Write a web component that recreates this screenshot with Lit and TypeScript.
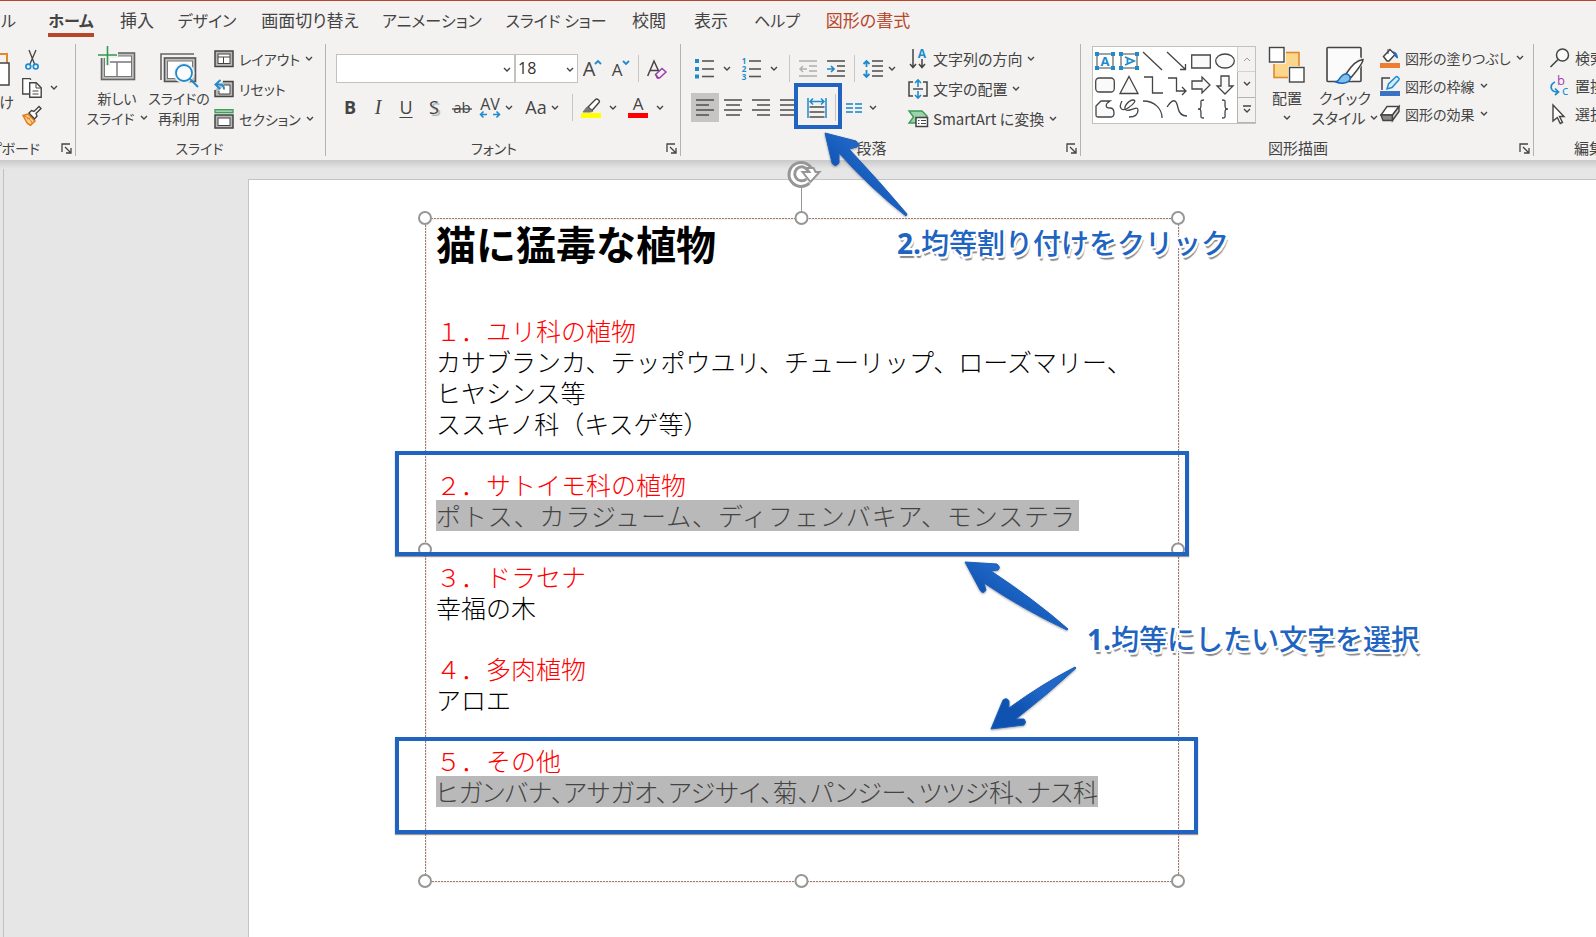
import { LitElement, html, svg, css, nothing } from "lit";
import { customElement } from "lit/decorators.js";
import { classMap } from "lit/directives/class-map.js";

const INK = "#444444";
const BLUE = "#1e8bcd";

const icon = (w: number, h: number, body: unknown) => html`<svg
  class="icon" width=${w} height=${h} viewBox="0 0 ${w} ${h}" fill="none" stroke=${INK} aria-hidden="true">${body}</svg>`;

const chevron = html`<svg class="icon" width="8" height="6" viewBox="0 0 8 6" fill="none" stroke="#444" stroke-width="1.4" aria-hidden="true"><path d="M1 1l3 3 3-3"/></svg>`;

const lines = (rows: number[][], color = "#555") =>
  svg`${rows.map(([x1, x2, y]) => svg`<path d="M${x1} ${y}H${x2}" stroke=${color} stroke-width="1.6"/>`)}`;

const I = {
  cut: icon(20, 20, svg`<path d="M7 0l5.500 14M14 0L8 14" stroke-width="1.300"/><circle cx="6.300" cy="16.600" r="2.400" stroke=${BLUE} stroke-width="1.700"/><circle cx="13.700" cy="16.600" r="2.400" stroke=${BLUE} stroke-width="1.700"/>`),
  copy: icon(20, 20, svg`<path d="M7 16H.7V.700H8l1 1" fill="#fff" stroke-width="1.300"/><path d="M7.700 4.700h6.500l5 5v9.500H7.700z" fill="#fff" stroke-width="1.400"/><path d="M14 5v5h5M10.500 13h6M10.500 16h6"/>`),
  brush: icon(20, 20, svg`<path d="M1 9.500l5-1.500 7 7-4.500 4.300-3-1.800z" fill="#ffd08a" stroke="#e07b18" stroke-width="1.500"/><path d="M2 10c4 1 7 4 8 7M5 13l3-1" stroke="#e07b18"/><path d="M7 7l2.500-2.500 2.500 1 5-5 2 2-5 5 1 2.500L12.500 13z" fill="#fff" stroke-width="1.400"/>`),
  layout: icon(20, 18, svg`<rect x="1" y="1" width="18" height="15.500" fill="#b9b9b9" stroke-width="1.500"/><rect x="4" y="4" width="12" height="9.500" fill="#fff"/><path d="M4 7h12M9.500 7v6.500"/>`),
  reset: icon(20, 18, svg`<path d="M9 1.500h10v15H1V10" fill="#b9b9b9" stroke-width="1.500"/><path d="M10 5h6v9H5v-3" fill="#fff"/><path d="M6.500 0L1.500 4.500 6 9M2 4.500h4c3 0 4 2 4 5" stroke=${BLUE} stroke-width="2"/>`),
  section: icon(20, 20, svg`<rect x="1" y=".7" width="18" height="3" fill="#9fd5ae" stroke="#3d9a57" stroke-width="1.300"/><rect x="1" y="6" width="18" height="13" fill="#b9b9b9" stroke-width="1.500"/><rect x="4" y="9" width="12" height="7.500" fill="#fff"/>`),
  newSlide: icon(38, 36, svg`<rect x="3.500" y="7" width="33" height="26.500" fill="#c0c0c0" stroke="#666" stroke-width="1.600"/><rect x="6.500" y="10" width="27" height="20.500" fill="#fff" stroke="#777"/><path d="M6.500 16h27M19 16v14.500" stroke="#777" stroke-width="1.400"/><path d="M0 6h7V0h5v6h8v6h-8v8H7v-8H0z" fill="#f3f2f1" stroke="none"/><path d="M0 9h19M9.500 0v19" stroke="#2f9a50" stroke-width="1.600"/>`),
  reuse: icon(38, 36, svg`<path d="M1 28V2h33" stroke="#666" stroke-width="1.600"/><rect x="4.500" y="6" width="31" height="23.500" fill="#c0c0c0" stroke="#555" stroke-width="1.600"/><rect x="7.500" y="9" width="25" height="17.500" fill="#fff" stroke="#777"/><circle cx="24" cy="21" r="10.500" fill="#f3f2f1" stroke="none"/><circle cx="24" cy="21" r="8" fill="#fbfbfb" stroke=${BLUE} stroke-width="1.800"/><path d="M30 27l8 8" stroke=${BLUE} stroke-width="2"/>`),
  clear: icon(20, 20, svg`<path d="M.700 17L7 2l6 13M3 11.500h8" stroke-width="1.500"/><path d="M8.500 15.500L15 9.500l4 3.500-6.500 6h-2z" fill="#f3f2f1" stroke="#9a3fae" stroke-width="1.500"/><path d="M9 15.500l3 3.500h-2z" fill="#9a3fae" stroke="#9a3fae"/>`),
  pen: icon(20, 20, svg`<path d="M7 9l7.500-7.500c1.500-1.500 5 1 3.500 3L11 12.500z" fill="#fff" stroke-width="1.400"/><path d="M6 9l5.500 4.500L9 14H2z" fill="#777" stroke="#777"/><rect x="0" y="15" width="20" height="5" fill="#ffff00" stroke="none"/>`),
  bullets: icon(20, 20, svg`<path d="M0 0h4v4H0zM0 8h4v4H0zM0 15.500h4v4H0z" fill=${BLUE} stroke="none"/>${lines([[7, 19, 2], [7, 19, 10], [7, 19, 17.500]])}`),
  dedent: icon(20, 20, svg`${lines([[1, 19, 2], [11, 19, 7], [11, 19, 12], [1, 19, 17]], "#b1b1b1")}<path d="M2 10h7M5 7l-3 3 3 3" stroke="#b1b1b1" stroke-width="1.500"/>`),
  indent: icon(20, 20, svg`${lines([[1, 19, 2], [11, 19, 7], [11, 19, 12], [1, 19, 17]])}<path d="M1 10h7M5 7l3 3-3 3" stroke=${BLUE} stroke-width="1.700"/>`),
  spacing: icon(20, 20, svg`${lines([[9, 20, 2], [9, 20, 7], [9, 20, 12], [9, 20, 17]])}<path d="M3.500 2v6M.500 5l3-3 3 3M3.500 11v7M.500 15l3 3 3-3" stroke=${BLUE} stroke-width="1.800"/>`),
  left: icon(20, 20, lines([[1, 19, 2], [1, 14, 7], [1, 19, 12], [1, 14, 17]])),
  center: icon(20, 20, lines([[1, 19, 2], [3, 17, 7], [1, 19, 12], [3, 17, 17]])),
  right: icon(20, 20, lines([[1, 19, 2], [6, 19, 7], [1, 19, 12], [6, 19, 17]])),
  justify: icon(20, 20, lines([[1, 19, 2], [1, 19, 7], [1, 19, 12], [1, 19, 17]])),
  distribute: icon(20, 20, svg`${lines([[2.500, 17.500, 9], [2.500, 17.500, 14], [2.500, 17.500, 19]])}<path d="M1 0v20M19 0v20" stroke=${BLUE} stroke-width="1.500"/><path d="M3 3.500h14M6 .500l-3 3 3 3M14 .500l3 3-3 3" stroke=${BLUE} stroke-width="1.500"/>`),
  columns: icon(20, 20, lines([[2, 9, 6], [11, 18, 6], [2, 9, 10], [11, 18, 10], [2, 9, 14], [11, 18, 14]], BLUE)),
  textFit: icon(20, 20, svg`<path d="M5 3H1v14h4M15 3h4v14h-4" stroke-width="1.500"/><path d="M5 10h10" stroke-width="1.400"/><path d="M10 1v7M7 4l3-3 3 3M10 12v7M7 16l3 3 3-3" stroke=${BLUE} stroke-width="1.600"/>`),
  smartArt: icon(20, 18, svg`<path d="M1 1h13l5 5-2 2H8v5H1l4.500-6z" fill="#9bd3ab" stroke="#3d9a57" stroke-width="1.400"/><rect x="8" y="7.500" width="11.500" height="9" fill="#fff" stroke-width="1.500"/><path d="M10 10.500h1.500M13 10.500h5M10 13.500h1.500M13 13.500h5"/>`),
  arrange: icon(38, 38, svg`<rect x="6" y="6.500" width="25" height="25" fill="#fbd68c" stroke="#e08a2c" stroke-width="1.600"/><rect x="0" y="0" width="18" height="18" fill="#f3f2f1" stroke="none"/><rect x="20" y="20" width="18" height="18" fill="#f3f2f1" stroke="none"/><rect x="1.500" y="1.500" width="14.500" height="14.500" fill="#fff" stroke-width="1.400"/><rect x="21.500" y="21.500" width="14.500" height="14.500" fill="#fff" stroke-width="1.400"/>`),
  quick: icon(38, 38, svg`<rect x="1" y="1.500" width="34" height="34" rx="1" fill="#fbfbfb" stroke-width="1.600"/><path d="M18 28L34 13l3 2-12 18z" fill="#fff" stroke="#f3f2f1" stroke-width="3"/><path d="M20 28c5-8 11-14 17-14.500 0 4-6 11-12 18z" fill="#fff" stroke-width="1.500"/><path d="M10 36c4-1 4-8 10-8 3 0 5 3 4 5.500-2 4-9 4.500-14 2.500z" fill="#83bfe9" stroke="#1767b8" stroke-width="1.500"/>`),
  fill: icon(20, 20, svg`<path d="M3.500 8.500L10 1.500l5 5-6 6.500H7z" fill="#fff" stroke-width="1.500"/><path d="M8 1v5" /><path d="M13 4c3 0 4 2 4.500 6-2-1-3-2-3-4" fill="#2468b8" stroke="#2468b8"/><rect x="0" y="15" width="20" height="5" fill="#ee7d31" stroke="none"/>`),
  outline: icon(20, 20, svg`<path d="M10 2H2v12" stroke-width="1.500"/><path d="M7 13l1.500-5L16 .800c1-.800 4 1.800 3 3L12 11.500z" fill="#d7ecfa" stroke=${BLUE} stroke-width="1.500"/><rect x="0" y="15" width="20" height="5" fill="#3a73c6" stroke="none"/>`),
  effects: icon(20, 18, svg`<path d="M7 1.500h12L12.500 10H1z" fill="#fff" stroke-width="1.400"/><path d="M1 10h11.500v5.500H3z" fill="#8a8a8a" stroke-width="1.400"/><path d="M19 1.500v5l-6.500 9V10z" fill="#d0d0d0" stroke-width="1.400"/>`),
  find: icon(20, 20, svg`<circle cx="12.500" cy="7" r="6" stroke-width="1.500" fill="#fbfbfb"/><path d="M8 11.500L.500 19" stroke-width="1.600"/>`),
  select: icon(20, 20, svg`<path d="M3 1l11 11.500H9.500l3 6-2.200 1-3-6L3 17z" fill="#fff" stroke-width="1.400"/>`),
  launch: icon(11, 11, svg`<path d="M1 9V1h8" stroke-width="1.300"/><path d="M4 4l6 6M10 5v5H5" stroke-width="1.300"/>`),
};

const textMark = (x: number, y: number, size: number, s: string, color = INK, cls = "") =>
  svg`<text class="mark ${cls}" x=${x} y=${y} font-size=${size} fill=${color} stroke="none" text-anchor="middle">${s}</text>`;

const marks = {
  grow: icon(22, 20, svg`${textMark(8, 17, 20, "A")}<path d="M14 5l3-3 3 3" stroke=${BLUE} stroke-width="1.800"/>`),
  shrink: icon(22, 20, svg`${textMark(8, 17, 17, "A")}<path d="M14 2l3 3 3-3" stroke=${BLUE} stroke-width="1.800"/>`),
  strike: icon(22, 20, svg`${textMark(11, 15, 15, "ab")}<path d="M1 11h20" stroke-width="1.300"/>`),
  spacing: icon(22, 22, svg`${textMark(11, 13, 16, "AV")}<path d="M1 17.500h7M4.500 14.500l-3 3 3 3M21 17.500h-7M17.500 14.500l3 3-3 3" stroke=${BLUE} stroke-width="1.600"/>`),
  color: icon(20, 20, svg`${textMark(10, 12, 17, "A")}<rect x="0" y="15" width="20" height="5" fill="#ff0000" stroke="none"/>`),
  numbers: icon(20, 20, svg`${textMark(2, 5, 8, "1", BLUE, "bold")}${textMark(2, 13, 8, "2", BLUE, "bold")}${textMark(2, 21, 8, "3", BLUE, "bold")}${lines([[7, 19, 2], [7, 19, 10], [7, 19, 17.500]])}`),
  direction: icon(20, 20, svg`<path d="M5 0v18M2 15l3 3.500L8 15M14 10v8M11 15l3 3.500 3-3.500" stroke-width="1.500"/>${textMark(14, 9, 12, "A", BLUE, "bold")}`),
  replace: icon(20, 20, svg`${textMark(11, 9, 13, "b", "#a33fb5")}${textMark(15, 19, 13, "c", BLUE)}<path d="M5 6C-1 9 0 16 8 16M5 12.500L8.500 16 5 19" stroke=${BLUE} stroke-width="1.700"/>`),
};

const corners = svg`<path d="M0 1h4v4H0zM16 1h4v4h-4zM0 15h4v4H0zM16 15h4v4h-4z" fill=${BLUE} stroke="none"/>`;
const shape = (d: string, fill = "none") => svg`<path d=${d} fill=${fill} stroke-width="1.300"/>`;
const shapes: [string, unknown][] = [
  ["テキスト ボックス", svg`<rect x="2" y="3" width="16" height="14"/>${corners}${textMark(10, 15, 13, "A", BLUE, "bold")}`],
  ["縦書きテキスト ボックス", svg`<rect x="2" y="3" width="16" height="14"/>${corners}<path d="M6 6l9 4-9 4M8.500 7v6" stroke=${BLUE} stroke-width="1.800"/>`],
  ["線", shape("M0 1l19 18")],
  ["矢印", shape("M0 1l18 17M18.500 13v5.500H13")],
  ["正方形/長方形", shape("M.700 4h18.600v13H.700z", "#fafafa")],
  ["楕円", svg`<ellipse cx="10" cy="10" rx="9.300" ry="7" fill="#fafafa" stroke-width="1.300"/>`],
  ["角丸四角形", svg`<rect x=".7" y="3" width="18.600" height="14" rx="3.500" fill="#fafafa" stroke-width="1.300"/>`],
  ["二等辺三角形", shape("M10 1.500L19 18.500H1z", "#fafafa")],
  ["カギ線コネクタ", shape("M1 2h8.500v16H20")],
  ["カギ線矢印コネクタ", shape("M1 3h8.500v13H19M15 12l4 4-4 4")],
  ["右矢印", shape("M1 6h10V2l8 8-8 8v-4H1z", "#fafafa")],
  ["下矢印", shape("M6 1v10H2l8 8 8-8h-4V1z", "#fafafa")],
  ["フリーフォーム", shape("M1 7l5-5h9c-5 3-5 7 0 7 4 0 4 3 4 5 0 3-1 4-3 4H3c-2 0-2-1-2-3z", "#fafafa")],
  ["曲線", shape("M3 2c-4 7 0 11 6 7s9-8 5-8-11 8-7 10 12-5 12 0-4 7-9 7")],
  ["円弧", shape("M0 2c12 0 19 8 19 17")],
  ["曲線コネクタ", shape("M0 8c8-12 10-4 11 1s4 8 9 8")],
  ["左中かっこ", shape("M13 1c-4 0-3 1-3 5s-1 4-3 4c2 0 3 0 3 4s-1 5 3 5")],
  ["右中かっこ", shape("M7 1c4 0 3 1 3 5s1 4 3 4c-2 0-3 0-3 4s1 5-3 5")],
];

const tabs = ["ファイル", "ホーム", "挿入", "デザイン", "画面切り替え", "アニメーション", "スライド ショー", "校閲", "表示", "ヘルプ", "図形の書式"];
const isKana = (s: string) => /^[\u30a0-\u30ff ]+$/.test(s);

const sections = [
  { title: "１．ユリ科の植物", body: ["カサブランカ、テッポウユリ、チューリップ、ローズマリー、", "ヒヤシンス等", "ススキノ科（キスゲ等）"], mark: "" },
  { title: "２．サトイモ科の植物", body: ["ポトス、カラジューム、ディフェンバキア、モンステラ"], mark: "wide" },
  { title: "３．ドラセナ", body: ["幸福の木"], mark: "" },
  { title: "４．多肉植物", body: ["アロエ"], mark: "" },
  { title: "５．その他", body: ["ヒガンバナ、アサガオ、アジサイ、菊、パンジー、ツツジ科、ナス科"], mark: "dense" },
];

@customElement("app-root")
export class AppRoot extends LitElement {
  static styles = css`
    :host {
      display: flex;
      flex-direction: column;
      position: relative;
      height: 100vh;
      overflow: hidden;
      background: #e6e6e6;
      color: #444;
      font: 15px/20px "Noto Sans CJK JP", sans-serif;
    }
    * { box-sizing: border-box; }
    button {
      margin: 0; padding: 0; border: 0; background: none; color: inherit;
      font: inherit; font-feature-settings: inherit; white-space: nowrap;
    }
    .icon { display: block; flex: none; overflow: visible; }
    .mark { font-family: "Open Sans", sans-serif; }
    .mark.bold { font-weight: 700; }

    .ribbon {
      position: relative;
      flex: none;
      background: #f3f2f1;
      border-top: 1px solid #b7472a;
      font-feature-settings: "palt";
      overflow: hidden;
    }
    .tabs {
      display: grid;
      grid-template-columns: 33px 76px 56px 84px 122px 122px 126px 60px 64px 68px 114px;
      height: 43px;
      font-size: 17px;
    }
    .tab { display: flex; justify-content: center; padding-top: 7px; line-height: 24px; }
    .tab.kana { font-size: 16px; }
    .tab:first-child { justify-content: flex-end; padding-right: 17px; }
    .tab span { height: 29px; }
    .tab.active { font-weight: 700; }
    .tab.active span { border-bottom: 4px solid #b7472a; }
    .tab.context { color: #b7472a; }

    .groups { display: flex; height: 116px; padding-bottom: 4px; }
    .group { display: flex; flex-direction: column; flex: none; border-right: 1px solid #b5b3b1; }
    .group:last-child { border-right: 0; }
    .content { display: flex; flex: 1; }
    .footer { display: grid; grid-template-columns: 1fr 18px; height: 16px; line-height: 16px; align-items: center; }
    .footer span { text-align: center; white-space: nowrap; }
    .footer button { justify-self: end; padding-right: 3px; }
    .clipboard { width: 76px; }
    .clipboard, .slides, .font .footer { font-size: 14px; }
    .clipboard .footer { grid-template-columns: 40px 1fr; }
    .clipboard .footer span { display: flex; justify-content: flex-end; }
    .slides { width: 250px; }
    .slides .content { padding-left: 10px; }
    .slides .footer { padding-left: 16px; }
    .font { width: 355px; }
    .paragraph { width: 400px; }
    .drawing { width: 453px; }
    .editing { width: 140px; }

    .paste { display: flex; flex-direction: column; align-items: flex-end; width: 14px; padding-top: 8px; gap: 4px; font-size: 15px; }
    .clips { display: grid; grid-template-rows: repeat(3, 28px); padding: 2px 0 0 8px; }
    .clip { display: flex; align-items: center; gap: 8px; }

    .big { display: flex; flex-direction: column; align-items: center; width: 62px; padding-top: 2px; }
    .big .pic { display: flex; align-items: flex-start; height: 42px; }
    .big .down { padding-top: 7px; }
    .line { display: flex; align-items: center; gap: 5px; }
    .reuse .pic { padding-top: 6px; }

    .stack { display: flex; flex-direction: column; padding-left: 4px; }
    .row { display: flex; align-items: center; gap: 5px; height: 30px; }
    .row.compact { height: 28px; }

    .tools { display: flex; flex-direction: column; padding: 10px 0 0 10px; gap: 10px; }
    .bar { display: flex; align-items: center; height: 29px; }
    .bar > * { flex: none; }
    .tool { display: grid; place-items: center; width: 28px; height: 29px; font: 18px/29px "Open Sans", sans-serif; }
    .tool.on { background: #c6c5c4; }
    .tool.bold { font-weight: 700; }
    .tool.italic { font-family: "Liberation Serif", serif; font-style: italic; font-size: 20px; }
    .tool.under { text-decoration: underline; text-underline-offset: 3px; }
    .tool.shade { text-shadow: 2px 2px 1px #aaa; }
    .more { display: grid; place-items: center; width: 16px; height: 29px; margin-right: 3px; }
    .more.tight { width: 10px; margin-right: 8px; }
    .sep { width: 1px; height: 27px; margin: 0 4px; background: #c8c6c4; }
    .combo { position: relative; display: flex; }
    .combo select {
      appearance: none; height: 29px; margin: 0; padding: 0 2px; border: 1px solid #c3c1bf; border-radius: 0;
      background: #fff; color: #333; font: 16px/27px "Open Sans", sans-serif;
    }
    .combo .name { width: 179px; }
    .combo .size { width: 63px; }
    .combo .icon { position: absolute; right: 4px; top: 13px; pointer-events: none; }
    .orient { padding-left: 12px; }
    .paragraph .tools { flex: none; width: 215px; }

    .gallery { display: flex; flex: none; margin: 2px 2px 0 11px; width: 164px; height: 78px; border: 1px solid #c3c1bf; background: #fff; }
    .shapes { display: grid; grid-template-columns: repeat(6, 24px); grid-template-rows: repeat(3, 24px); padding: 2px 0; flex: 1; }
    .shapes button { display: grid; place-items: center; }
    .scroll { display: grid; grid-template-rows: repeat(3, 1fr); width: 18px; background: #f3f2f1; }
    .scroll button { display: grid; place-items: center; border: 1px solid #b5b3b1; border-width: 0 0 1px 1px; }
    .scroll button:first-child { opacity: 0.5; }
    .drawing .big { flex: none; width: 58px; }
    .drawing .stack { padding-left: 6px; font-size: 14px; }
    .editing .stack { padding-left: 16px; }
    .editing .footer { grid-template-columns: 78px; justify-content: start; padding-left: 16px; }

    .work { display: flex; flex: 1; min-height: 0; position: relative; padding-left: 3px; }
    .work::before { content: ""; position: absolute; inset: 0 0 auto; height: 9px; background: linear-gradient(#c9c9c9, #e6e6e6); }
    .desk { flex: 1; display: flex; border-left: 1px solid #c0c0c0; margin-top: 3px; padding: 16px 0 0 244px; }
    .slide { flex: 1; padding: 38px 0 0 176px; background: #fff; border: 1px solid #c4c4c4; border-width: 1px 0 0 1px; }

    .box { position: relative; width: 753px; height: 663px; padding: 2px 0 0 11px; color: #000; }
    .edge { position: absolute; inset: 0; width: 100%; height: 100%; overflow: visible; }
    .text { position: relative; }
    h1 { margin: 0 0 49px; font-size: 40px; line-height: 46px; font-weight: 700; }
    .section { margin-bottom: 30px; font-size: 25px; line-height: 31px; font-weight: 300; white-space: nowrap; }
    h2 { margin: 0; font: inherit; color: #f00; }
    p { margin: 0; }
    .wide, .dense { background: #b9b9b9; color: #444; text-align: justify; text-align-last: justify; white-space: normal; }
    .wide { width: 643px; padding-right: 4px; }
    .dense { width: 662px; font-feature-settings: "palt"; }

    .notes { position: absolute; inset: 0; pointer-events: none; }
    .arrows { position: absolute; inset: 0; overflow: visible; filter: drop-shadow(0 1px 1px #5558); }
    .frame { position: absolute; border: 4px solid #2063c0; box-shadow: 0 1px 1px #5559; }
    .frame.button { left: 794px; top: 83px; width: 48px; height: 46px; box-shadow: none; }
    .frame.second { left: 395px; top: 451px; width: 794px; height: 105px; }
    .frame.fifth { left: 395px; top: 737px; width: 803px; height: 97px; }
    .note {
      position: absolute; margin: 0; color: #2063c0; font-size: 28px; line-height: 36px; font-weight: 500; white-space: nowrap;
      text-shadow: 2px 0 #fff, -2px 0 #fff, 0 2px #fff, 0 -2px #fff, 2px 2px #fff, -2px 2px #fff, 2px -2px #fff, -2px -2px #fff, 2px 4px 1px #888;
    }
    .note b { font-family: "Open Sans", sans-serif; }
    .note.click { left: 897px; top: 224px; }
    .note.pick { left: 1087px; top: 620px; }
  `;

  private footer(label: string, launcher = true) {
    return html`<div class="footer">
      <span>${label}</span>
      ${launcher ? html`<button aria-label="${label}の設定">${I.launch}</button>` : nothing}
    </div>`;
  }

  private tool(label: string, content: unknown, cls = "") {
    return html`<button class="tool ${cls}" aria-label=${label}>${content}</button>`;
  }

  private more(label: string, tight = false) {
    return html`<button class=${classMap({ more: true, tight })} aria-label="${label}のオプション">${chevron}</button>`;
  }

  private row(pic: unknown, label: string, drop = true, cls = "") {
    return html`<button class="row ${cls}">${pic}<span>${label}</span>${drop ? chevron : nothing}</button>`;
  }

  private ribbon() {
    return html`<header class="ribbon">
      <nav class="tabs" aria-label="リボン タブ">
        ${tabs.map((t) => html`<button class=${classMap({ tab: true, kana: isKana(t), active: t === "ホーム", context: t === "図形の書式" })}><span>${t}</span></button>`)}
      </nav>
      <div class="groups">
        <section class="group clipboard">
          <div class="content">
            <button class="paste">
              ${icon(36, 36, svg`<path d="M4 2h25v12" stroke="#e08a2c" stroke-width="2"/><path d="M12 11h19v22H12z" fill="#fff" stroke-width="1.500"/>`)}
              <span>貼り付け</span>
            </button>
            <div class="clips">
              <button class="clip" aria-label="切り取り">${I.cut}</button>
              <button class="clip" aria-label="コピー">${I.copy}${chevron}</button>
              <button class="clip" aria-label="書式のコピー">${I.brush}</button>
            </div>
          </div>
          ${this.footer("クリップボード")}
        </section>

        <section class="group slides">
          <div class="content">
            <button class="big"><span class="pic">${I.newSlide}</span><span>新しい</span><span class="line">スライド ${chevron}</span></button>
            <button class="big reuse"><span class="pic">${I.reuse}</span><span>スライドの</span><span>再利用</span></button>
            <div class="stack">
              ${this.row(I.layout, "レイアウト")}${this.row(I.reset, "リセット", false)}${this.row(I.section, "セクション")}
            </div>
          </div>
          ${this.footer("スライド", false)}
        </section>

        <section class="group font">
          <div class="content">
            <div class="tools">
              <div class="bar">
                <span class="combo"><select class="name" aria-label="フォント"><option></option></select>${chevron}</span>
                <span class="combo"><select class="size" aria-label="フォント サイズ"><option>18</option></select>${chevron}</span>
                ${this.tool("拡大", marks.grow)}${this.tool("縮小", marks.shrink)}<i class="sep"></i>${this.tool("書式のクリア", I.clear)}
              </div>
              <div class="bar">
                ${this.tool("太字", "B", "bold")}${this.tool("斜体", "I", "italic")}${this.tool("下線", "U", "under")}${this.tool("影", "S", "shade")}
                ${this.tool("取り消し線", marks.strike)}${this.tool("文字の間隔", marks.spacing)}${this.more("文字の間隔", true)}
                ${this.tool("文字種の変換", "Aa")}${this.more("文字種の変換", true)}<i class="sep"></i>
                ${this.tool("蛍光ペン", I.pen)}${this.more("蛍光ペン")}${this.tool("フォントの色", marks.color)}${this.more("フォントの色")}
              </div>
            </div>
          </div>
          ${this.footer("フォント")}
        </section>

        <section class="group paragraph">
          <div class="content">
            <div class="tools">
              <div class="bar">
                ${this.tool("箇条書き", I.bullets)}${this.more("箇条書き")}${this.tool("段落番号", marks.numbers)}${this.more("段落番号")}<i class="sep"></i>
                ${this.tool("インデントを減らす", I.dedent)}${this.tool("インデントを増やす", I.indent)}<i class="sep"></i>
                ${this.tool("行間", I.spacing)}${this.more("行間", true)}
              </div>
              <div class="bar">
                ${this.tool("左揃え", I.left, "on")}${this.tool("中央揃え", I.center)}${this.tool("右揃え", I.right)}${this.tool("両端揃え", I.justify)}
                ${this.tool("均等割り付け", I.distribute)}<i class="sep"></i>${this.tool("段組み", I.columns)}${this.more("段組み", true)}
              </div>
            </div>
            <div class="stack orient">
              ${this.row(marks.direction, "文字列の方向")}${this.row(I.textFit, "文字の配置")}${this.row(I.smartArt, "SmartArt に変換")}
            </div>
          </div>
          ${this.footer("段落")}
        </section>

        <section class="group drawing">
          <div class="content">
            <div class="gallery">
              <div class="shapes">${shapes.map(([name, body]) => html`<button aria-label=${name}>${icon(20, 20, body)}</button>`)}</div>
              <div class="scroll">
                <button aria-label="上へ">${icon(8, 6, svg`<path d="M1 5l3-3 3 3"/>`)}</button>
                <button aria-label="下へ">${chevron}</button>
                <button aria-label="その他">${icon(8, 9, svg`<path d="M0 1h8M1 4l3 3 3-3" stroke-width="1.300"/>`)}</button>
              </div>
            </div>
            <button class="big"><span class="pic">${I.arrange}</span><span>配置</span><span class="down">${chevron}</span></button>
            <button class="big"><span class="pic">${I.quick}</span><span>クイック</span><span class="line">スタイル ${chevron}</span></button>
            <div class="stack">
              ${this.row(I.fill, "図形の塗りつぶし", true, "compact")}${this.row(I.outline, "図形の枠線", true, "compact")}${this.row(I.effects, "図形の効果", true, "compact")}
            </div>
          </div>
          ${this.footer("図形描画")}
        </section>

        <section class="group editing">
          <div class="content">
            <div class="stack">
              ${this.row(I.find, "検索", false, "compact")}${this.row(marks.replace, "置換", true, "compact")}${this.row(I.select, "選択", true, "compact")}
            </div>
          </div>
          ${this.footer("編集", false)}
        </section>
      </div>
    </header>`;
  }

  private edge() {
    const dots = [["0", "0"], ["50%", "0"], ["100%", "0"], ["0", "50%"], ["100%", "50%"], ["0", "100%"], ["50%", "100%"], ["100%", "100%"]];
    return html`<svg class="edge" fill="none" aria-hidden="true">
      <rect x="1" y="1" width="100%" height="100%" stroke="#f9dccb"/>
      <rect width="100%" height="100%" stroke="#8d7f7a" stroke-dasharray="2 1" shape-rendering="crispEdges"/>
      <svg x="50%" y="0" overflow="visible">
        <path d="M0-6V-32" stroke="#969696"/>
        <circle cx="0" cy="-44" r="12" fill="#fff" stroke="none"/>
        <path d="M8-35A12 12 0 1 1 11-47" stroke="#969696" stroke-width="3"/>
        <path d="M5-39A7 7 0 1 1 7-46" stroke="#969696" stroke-width="3"/>
        <path d="M3-46h5l-3-4h7l2 4h4L9-36 1-46z" fill="#fff" stroke="#969696" stroke-width="2"/>
      </svg>
      ${dots.map(([x, y]) => svg`<circle cx=${x} cy=${y} r="6" fill="#fff" stroke="#969696" stroke-width="2"/>`)}
    </svg>`;
  }

  private arrow(d: string) {
    return svg`<path d=${d} fill="url(#ink)" stroke="#1c5fbe" stroke-width="1" stroke-linejoin="round"/>`;
  }

  render() {
    return html`
      ${this.ribbon()}
      <main class="work">
        <div class="desk">
          <article class="slide">
            <div class="box">
              ${this.edge()}
              <div class="text">
                <h1>猫に猛毒な植物</h1>
                ${sections.map((s) => html`<section class="section"><h2>${s.title}</h2>${s.body.map((b) => html`<p class=${s.mark}>${b}</p>`)}</section>`)}
              </div>
            </div>
          </article>
        </div>
      </main>
      <div class="notes">
        <svg class="arrows" width="100%" height="100%" aria-hidden="true">
          <defs><linearGradient id="ink" x1="0" y1="1" x2="1" y2="0"><stop offset="0.300" stop-color="#0f52b0"/><stop offset="0.600" stop-color="#1f66c6"/></linearGradient></defs>
          ${this.arrow("M825 133l31 8q4 3 1 6l-8 2Q880 182 907 214L906 216Q870 188 839 153l0 10q-4 5-7 0z")}
          ${this.arrow("M965 562l32 2q4 3 1 6l-7 1Q1035 600 1068 629L1067 630Q1024 610 984 583l2 7q-3 5-6 0z")}
          ${this.arrow("M991 729l12-29q4-3 6 1l0 7Q1042 684 1075 667L1076 668Q1048 694 1016 719l8 0q3 3 0 6z")}
        </svg>
        <div class="frame button"></div>
        <div class="frame second"></div>
        <div class="frame fifth"></div>
        <p class="note click"><b>2.</b>均等割り付けをクリック</p>
        <p class="note pick"><b>1.</b>均等にしたい文字を選択</p>
      </div>
    `;
  }
}
